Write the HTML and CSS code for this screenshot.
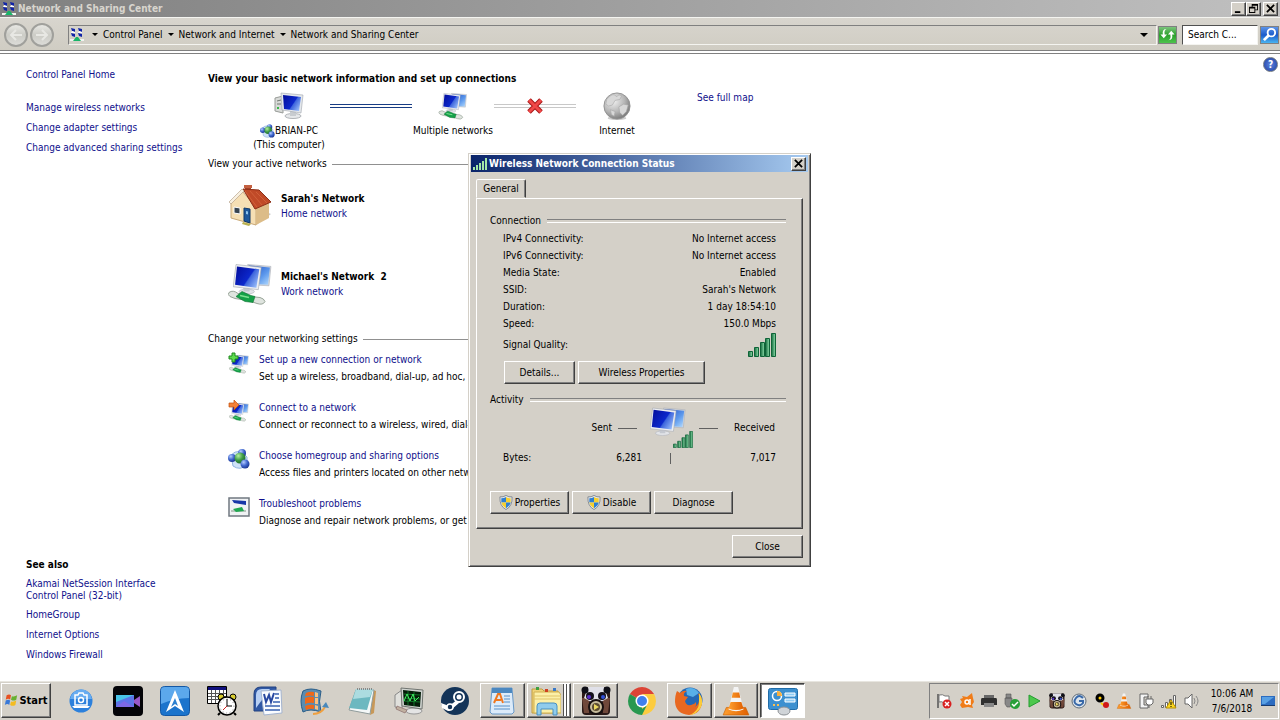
FILE: index.html
```
<!doctype html>
<html lang="en">

<head>
    <meta charset="utf-8">
    <title>Network and Sharing Center</title>
    <link rel="stylesheet" href="styles.css">
</head>

<body>
    <!-- shared icons -->
    <svg class="defs" aria-hidden="true">
        <defs>
            <linearGradient id="screen" x1="0" y1=".2" x2="1" y2=".8">
                <stop offset="0" stop-color="#0410a0" />
                <stop offset=".55" stop-color="#0c28cc" />
                <stop offset=".6" stop-color="#3c64dc" />
                <stop offset="1" stop-color="#9cc0fa" />
            </linearGradient>
            <linearGradient id="screen2" x1="0" y1="0" x2="1" y2="1">
                <stop offset="0" stop-color="#1c48c0" />
                <stop offset=".6" stop-color="#5c98ec" />
                <stop offset="1" stop-color="#b4dcff" />
            </linearGradient>
            <radialGradient id="grayball" cx=".35" cy=".3" r=".75">
                <stop offset="0" stop-color="#f4f4f4" />
                <stop offset=".6" stop-color="#b4b4b4" />
                <stop offset="1" stop-color="#777" />
            </radialGradient>
            <radialGradient id="blueball" cx=".35" cy=".3" r=".8">
                <stop offset="0" stop-color="#b4ccff" />
                <stop offset=".5" stop-color="#3f66cc" />
                <stop offset="1" stop-color="#142c86" />
            </radialGradient>
            <radialGradient id="greenball" cx=".35" cy=".3" r=".8">
                <stop offset="0" stop-color="#b4f0a0" />
                <stop offset=".5" stop-color="#3f9c48" />
                <stop offset="1" stop-color="#146024" />
            </radialGradient>
            <linearGradient id="bar" x1="0" y1="0" x2="1" y2="0">
                <stop offset="0" stop-color="#12683c" />
                <stop offset="1" stop-color="#8fe0ac" />
            </linearGradient>
            <linearGradient id="cone" x1="0" y1="0" x2="1" y2="0">
                <stop offset="0" stop-color="#ffa030" />
                <stop offset="1" stop-color="#e06000" />
            </linearGradient>
        </defs>
        <symbol id="monitors" viewBox="5 0 40 32">
            <path d="M20 1l24 2-2 20-19-1z" fill="#d4d8de" stroke="#a8acb4" stroke-width=".6" />
            <path d="M21 2l22 2-2 18-18-1z" fill="url(#screen2)" />
            <ellipse cx="19" cy="29" rx="8" ry="2.500" fill="#e2e4e8" stroke="#b4b8c0" stroke-width=".7" />
            <path d="M15 23l7 2v4h-6z" fill="#c4c8d0" />
            <path d="M8 1l26 3-3 23L5 24z" fill="#eceef2" stroke="#a0a4ac" stroke-width=".6" />
            <path d="M9 3l23 3-3 19L7 22z" fill="url(#screen)" />
        </symbol>
        <symbol id="nets" viewBox="0 0 44 43">
            <use href="#monitors" x="5" y="1" width="39" height="31" />
            <path d="M1 30q4-3 9 1l12 3 10 1q4 1 5 4-2 4-8 2l-9-3-13-2-5-2q-3-2-1-4z" fill="#dfe4df" stroke="#98a498" />
            <path d="M8 34l6-5 9 4 4 1-2 6-8-1z" fill="#14a048" stroke="#107030" stroke-width=".6" />
            <path d="M12 33l9 2" stroke="#7ce090" stroke-width="1.500" />
        </symbol>
        <symbol id="pc" viewBox="0 0 30 28">
            <path d="M1 6l8-2v17l-8-2z" fill="#d8dad8" stroke="#989c98" />
            <path d="M3 9l4-1M3 12h4" stroke="#707870" />
            <path d="M3 15h2v2H3z" fill="#38b848" />
            <ellipse cx="19" cy="24" rx="8" ry="2.500" fill="#e6e8ea" stroke="#b0b4b8" />
            <path d="M16 18h6v6h-6z" fill="#c8ccd0" />
            <path d="M7 1l22 2-2 18-19-3z" fill="#e4e8ec" stroke="#a0a4ac" stroke-width=".6" />
            <path d="M9 3l18 2-2 14-15-2z" fill="url(#screen)" />
        </symbol>
        <symbol id="homegroup" viewBox="0 0 22 20">
            <path d="M3 6q8-8 16 2v8q-7 6-14 1z" fill="#cfe2f8" stroke="#90b4e0" />
            <circle cx="14" cy="4" r="4" fill="url(#blueball)" />
            <circle cx="4" cy="9" r="4" fill="url(#blueball)" />
            <circle cx="12" cy="9" r="5.500" fill="url(#greenball)" />
            <circle cx="17" cy="15" r="4.500" fill="url(#blueball)" />
        </symbol>
        <symbol id="bars" viewBox="0 0 28 24">
            <g fill="url(#bar)" stroke="#0f6438">
                <path d="M.5 18.500h4v5h-4z" />
                <path d="M6.500 14.500h4v9h-4z" />
                <path d="M12.500 9.500h4v14h-4z" />
                <path d="M17.500 5.500h4v18h-4z" />
                <path d="M23.500 .5h4v23h-4z" />
            </g>
        </symbol>
        <symbol id="shield" viewBox="0 0 14 16">
            <path d="M7 .5q3 2 6.500 1.500.5 10-6.500 13.500Q0 12 .5 2 4 2.500 7 .5z" fill="#e8ecf0" stroke="#808890" />
            <path d="M7 2v6H2V3.500Q5 3.500 7 2z" fill="#2f7fd0" />
            <path d="M7 2v6h5V3.500Q9 3.500 7 2z" fill="#f6cf30" />
            <path d="M7 8v6Q3 12 2 8z" fill="#f6cf30" />
            <path d="M7 8v6q4-2 5-6z" fill="#2f7fd0" />
        </symbol>
        <symbol id="center" viewBox="0 0 14 15">
            <path d="M1 1l4 1v3l-3-1zM8 1l4 1v3L9 4zM1 6l4 1v3L2 9zM8 6l4 1v3L9 9z" fill="#1024a8" />
            <path d="M2 4l3 1v1H1zM9 4l3 1v1H8z" fill="#fff" />
            <path d="M0 12h14v2H0z" fill="#f0f4f0" />
            <path d="M3 14l3-4h2l3 4z" fill="#18b468" />
        </symbol>
        <symbol id="vlc" viewBox="0 0 24 28">
            <path d="M3 20h18l3 7H0z" fill="url(#cone)" stroke="#c86000" stroke-width=".6" />
            <path d="M10 1h4l5 21q-7 3-14 0z" fill="#f4f4f4" />
            <path d="M9 6h6l1 5H8zM7 15h10l2 6q-7 3-14 0z" fill="url(#cone)" />
        </symbol>
        <symbol id="dvd" viewBox="0 0 30 30">
            <rect x="1" y="1" width="28" height="28" rx="4" fill="#2c1a18" />
            <path d="M1 12h7v15H3zM22 12h7l-2 15h-5z" fill="#70483a" />
            <path d="M7 1h16l4 11-7 4H10l-7-4z" fill="#e0e0e8" />
            <circle cx="4" cy="4" r="3.500" fill="#101018" />
            <circle cx="26" cy="4" r="3.500" fill="#101018" />
            <circle cx="9" cy="10" r="4" fill="#14101c" />
            <circle cx="21" cy="10" r="4" fill="#14101c" />
            <circle cx="8" cy="11" r="2" fill="#5a30d0" />
            <circle cx="22" cy="11" r="2" fill="#3050d8" />
            <circle cx="15" cy="21" r="7" fill="#c8bc9c" stroke="#181010" stroke-width="2" />
            <circle cx="15" cy="21" r="4" fill="#5c4c30" />
            <path d="M13 18l5 3-5 3z" fill="#ecd860" />
        </symbol>
    </svg>

    <header class="titlebar">
        <svg class="app-icon"><use href="#center" /></svg>
        <h1>Network and Sharing Center</h1>
        <div class="win-buttons">
            <button class="win-button" aria-label="Minimize"><svg viewBox="0 0 10 10"><path d="M1 8h6v2H1z" /></svg></button>
            <button class="win-button" aria-label="Restore"><svg viewBox="0 0 10 10"><path d="M3 0h7v7H7V6h2V2H4v1H3zM0 3h7v7H0zM1 5v4h5V5z" fill-rule="evenodd" /></svg></button>
            <button class="win-button last" aria-label="Close"><svg viewBox="0 0 10 10"><path d="M1 1l8 8M9 1L1 9" stroke="#000" stroke-width="2" /></svg></button>
        </div>
    </header>

    <nav class="toolbar">
        <div class="travel">
            <button class="round" aria-label="Back"><svg viewBox="0 0 14 14"><path d="M13 7H3M7 2L2 7l5 5" /></svg></button>
            <button class="round" aria-label="Forward"><svg viewBox="0 0 14 14"><path d="M1 7h10M7 2l5 5-5 5" /></svg></button>
        </div>
        <div class="address">
            <svg class="app-icon"><use href="#center" /></svg>
            <span class="arrow"></span>
            <a href="#">Control Panel</a>
            <span class="arrow"></span>
            <a href="#">Network and Internet</a>
            <span class="arrow"></span>
            <a href="#">Network and Sharing Center</a>
            <button class="history" aria-label="Previous locations"><span class="arrow big"></span></button>
        </div>
        <button class="refresh" aria-label="Refresh">
            <svg viewBox="0 0 16 16"><path d="M7 2Q4 3 5 8H7.500L4 12 .5 8H3Q2 2 7 2zM9 14q3-1 2-6H8.500L12 4l3.500 4H13q1 6-4 6z" fill="#fff" /></svg>
        </button>
        <input class="search" type="text" value="Search C..." aria-label="Search Control Panel">
        <button class="search-go" aria-label="Search">
            <svg viewBox="0 0 16 16" fill="none" stroke="#fff" stroke-width="2"><circle cx="10" cy="6" r="4" /><path d="M7 9l-5 5" stroke-width="3" /></svg>
        </button>
    </nav>

    <div class="content">
        <aside class="sidebar">
            <a href="#" class="home">Control Panel Home</a>
            <a href="#">Manage wireless networks</a>
            <a href="#">Change adapter settings</a>
            <a href="#">Change advanced sharing settings</a>
            <h2>See also</h2>
            <a href="#" class="two-lines">Akamai NetSession Interface Control Panel (32-bit)</a>
            <a href="#">HomeGroup</a>
            <a href="#">Internet Options</a>
            <a href="#">Windows Firewall</a>
        </aside>

        <main>
            <h2>View your basic network information and set up connections</h2>
            <div class="map">
                <div class="node">
                    <svg><use href="#pc" /></svg>
                    <span class="node-name"><svg class="tiny"><use href="#homegroup" /></svg>BRIAN-PC</span>
                    <span>(This computer)</span>
                </div>
                <div class="wire"></div>
                <div class="node">
                    <svg><use href="#nets" /></svg>
                    <span>Multiple networks</span>
                </div>
                <div class="wire broken">
                    <svg class="cross" viewBox="0 0 16 16"><path d="M2 2l12 12M14 2L2 14" stroke="#a81818" stroke-width="5" /><path d="M2 2l12 12M14 2L2 14" stroke="#f04848" stroke-width="3" /></svg>
                </div>
                <div class="node">
                    <svg viewBox="0 0 30 30">
                        <ellipse cx="15" cy="28" rx="10" ry="2" fill="#ccc" />
                        <circle cx="15" cy="15" r="14" fill="url(#grayball)" stroke="#909090" />
                        <path d="M4 8q5-6 8-5l3 2 2-2 3 1-2 4-5 1-3 5-4 1-3-2zM17 16l5-3 5 1-2 7-4 4-3-3zM8 19l5 2-1 5-3-2z" fill="#d8d8d8" stroke="#a4a4a4" stroke-width=".6" />
                    </svg>
                    <span>Internet</span>
                </div>
                <a class="full-map" href="#">See full map</a>
            </div>

            <h3 class="rule">View your active networks</h3>
            <div class="network">
                <svg viewBox="0 0 44 44">
                    <path d="M38 28l5 2-16 12z" fill="#c8c8c8" />
                    <path d="M17 2h6v7h-6z" fill="#a84428" />
                    <path d="M16 1h8v3h-8z" fill="#c46040" />
                    <path d="M3 17L14 7l14 16v18L3 34z" fill="#f6dfb4" stroke="#c8a878" />
                    <path d="M28 22l13-5v17l-13 7z" fill="#dcbc88" />
                    <path d="M15 5l16 1 12 12-16 7z" fill="#c04a28" stroke="#8c3018" />
                    <path d="M17 7l12 16M22 7l12 14M28 8l11 11" stroke="#d0603a" />
                    <path d="M1 18L14 5l2 2L3 20z" fill="#f8f0e0" stroke="#b09880" stroke-width=".6" />
                    <path d="M6 23l6 1v6l-6-1z" fill="#384450" stroke="#fff" />
                    <path d="M16 24l6 1v14l-6-2z" fill="#20589c" stroke="#103868" />
                    <path d="M18 27l2 .5v3l-2-.5z" fill="#90c4ec" />
                    <path d="M15 38l8 2-2 2-7-2z" fill="#b8b050" />
                </svg>
                <div>
                    <strong>Sarah's Network</strong>
                    <a href="#">Home network</a>
                </div>
            </div>
            <div class="network">
                <svg><use href="#nets" /></svg>
                <div>
                    <strong>Michael's Network&nbsp; 2</strong>
                    <a href="#">Work network</a>
                </div>
            </div>

            <h3 class="rule">Change your networking settings</h3>
            <ul class="tasks">
                <li>
                    <svg viewBox="0 0 22 22">
                        <use href="#nets" x="1" y="2" width="20" height="20" />
                        <path d="M4 1h3v3h3v3H7v3H4V7H1V4h3z" fill="#5cdc4c" stroke="#208820" />
                    </svg>
                    <a href="#">Set up a new connection or network</a>
                    <p>Set up a wireless, broadband, dial-up, ad hoc,</p>
                </li>
                <li>
                    <svg viewBox="0 0 22 22">
                        <use href="#nets" x="1" y="2" width="20" height="20" />
                        <path d="M1 3h5V0l5 5-5 5V7H1z" fill="#f48038" stroke="#c05010" stroke-width=".7" />
                    </svg>
                    <a href="#">Connect to a network</a>
                    <p>Connect or reconnect to a wireless, wired, dial-up</p>
                </li>
                <li>
                    <svg><use href="#homegroup" /></svg>
                    <a href="#">Choose homegroup and sharing options</a>
                    <p>Access files and printers located on other network</p>
                </li>
                <li>
                    <svg viewBox="0 0 22 22">
                        <path d="M1 2h20v18H1z" fill="#f0f2f4" stroke="#707880" stroke-width="1.500" />
                        <path d="M4 4l14 1v4L6 7z" fill="#1838a8" />
                        <path d="M3 14h15v2H3z" fill="#b8c4bc" />
                        <path d="M5 13l9-2 2 4-8 1z" fill="#20a850" />
                    </svg>
                    <a href="#">Troubleshoot problems</a>
                    <p>Diagnose and repair network problems, or get</p>
                </li>
            </ul>
        </main>
        <button class="help" aria-label="Help">?</button>
    </div>

    <!-- status window, floats over the control panel -->
    <section class="dialog" role="dialog" aria-labelledby="dialog-title">
        <div class="dialog-title">
            <svg viewBox="0 0 14 12"><path d="M0 9h2v3H0zM3 7h2v5H3zM6 5h2v7H6zM9 3h2v9H9zM12 0h2v12h-2z" fill="#a4e8a8" /></svg>
            <h2 id="dialog-title">Wireless Network Connection Status</h2>
            <button class="win-button" aria-label="Close"><svg viewBox="0 0 10 10"><path d="M1 1l8 8M9 1L1 9" stroke="#000" stroke-width="2" /></svg></button>
        </div>
        <button class="tab">General</button>
        <div class="panel">
            <h3 class="etched">Connection</h3>
            <table class="facts">
                <tr><th>IPv4 Connectivity:</th><td>No Internet access</td></tr>
                <tr><th>IPv6 Connectivity:</th><td>No Internet access</td></tr>
                <tr><th>Media State:</th><td>Enabled</td></tr>
                <tr><th>SSID:</th><td>Sarah's Network</td></tr>
                <tr><th>Duration:</th><td>1 day 18:54:10</td></tr>
                <tr><th>Speed:</th><td>150.0 Mbps</td></tr>
                <tr class="signal"><th>Signal Quality:</th><td><svg><use href="#bars" /></svg></td></tr>
            </table>
            <div class="buttons inset">
                <button class="push">Details...</button>
                <button class="push wide">Wireless Properties</button>
            </div>
            <h3 class="etched">Activity</h3>
            <div class="activity">
                <span class="sent">Sent</span>
                <span class="dash"></span>
                <svg viewBox="0 0 44 42">
                    <use href="#monitors" x="0" y="0" width="36" height="29" />
                    <use href="#bars" x="23" y="24" width="20" height="17" />
                </svg>
                <span class="dash"></span>
                <span class="received">Received</span>
            </div>
            <div class="bytes">
                <span>Bytes:</span>
                <span class="count">6,281</span>
                <span class="pipe"></span>
                <span class="count">7,017</span>
            </div>
            <div class="buttons">
                <button class="push mid"><svg><use href="#shield" /></svg>Properties</button>
                <button class="push mid"><svg><use href="#shield" /></svg>Disable</button>
                <button class="push mid">Diagnose</button>
            </div>
        </div>
        <button class="push close">Close</button>
    </section>

    <footer class="taskbar">
        <button class="start">
            <svg viewBox="0 0 16 16">
                <path d="M3 2q3-2 5 0L7 7Q5 5 2 7z" fill="#e85020" />
                <path d="M9 3q3 1 6-1l-1 5q-3 2-6 0z" fill="#68b030" />
                <path d="M2 8q3-2 5 0l-1 5q-2-2-5 0z" fill="#3878d8" />
                <path d="M8 9q3 1 6-1l-1 5q-3 2-6 0z" fill="#f4bc20" />
            </svg>Start
        </button>
        <div class="apps">
            <button class="app" aria-label="Screenshot">
                <svg viewBox="0 0 30 30">
                    <circle cx="15" cy="15" r="11.500" fill="#2c80dc" />
                    <path d="M4 13q2-9 11-9.500 9 0 11 9.500z" fill="#68acf0" />
                    <path d="M9 9h3l1-2h4l1 2h3v10H9z" fill="none" stroke="#fff" stroke-width="1.500" />
                    <circle cx="15" cy="14" r="2.500" fill="none" stroke="#fff" stroke-width="1.500" />
                    <path d="M6 20h18l-2 2H8z" fill="#fff" />
                </svg>
            </button>
            <button class="app" aria-label="Video editor">
                <svg viewBox="0 0 30 30">
                    <rect width="30" height="30" rx="4" fill="#040408" />
                    <path d="M3 9h18v12H3z" fill="#5c74e8" />
                    <path d="M3 9h18L3 16z" fill="#48c4e8" />
                    <path d="M3 21l8-6 10 6z" fill="#7c68e4" />
                    <path d="M21 14l6-4v11l-6-4z" fill="#9858c8" />
                </svg>
            </button>
            <button class="app" aria-label="Browser">
                <svg viewBox="0 0 30 30">
                    <rect x=".5" y=".5" width="29" height="29" rx="4" fill="#1c74cc" stroke="#1458a4" />
                    <path d="M1 4q0-3 4-3h20q4 0 4 3v8Q14 12 1 18z" fill="#5ca8ec" />
                    <path d="M15 4l9 22-9-6-9 6z" fill="#fff" />
                    <path d="M15 12l3 8-3-2-4 3z" fill="#2c80d0" />
                </svg>
            </button>
            <button class="app" aria-label="Scheduler">
                <svg viewBox="0 0 30 30">
                    <path d="M.5 .5h19v17H.5z" fill="#fff" stroke="#000" />
                    <path d="M1 1h18v3H1z" fill="#10107c" />
                    <path d="M1 7.500h18M1 10.500h18M1 13.500h18M4.500 4v13M8.500 4v13M12.500 4v13M16.500 4v13" stroke="#555" />
                    <circle cx="14" cy="11" r="3" fill="#d8cc30" stroke="#000" />
                    <circle cx="26" cy="11" r="3" fill="#d8cc30" stroke="#000" />
                    <path d="M13 27l-2 2M27 27l2 2" stroke="#000" stroke-width="2" />
                    <circle cx="20" cy="20" r="9" fill="#fff" stroke="#000" stroke-width="1.500" />
                    <circle cx="20" cy="20" r="7" fill="none" stroke="#888" stroke-dasharray="1 2.600" />
                    <path d="M20 13v7h5" fill="none" stroke="#000" />
                    <path d="M20 20l-4 4" stroke="#d02020" />
                </svg>
            </button>
            <button class="app" aria-label="Word">
                <svg viewBox="0 0 30 30">
                    <path d="M1 25V8q0-7 7-7h15v24z" fill="#3058a4" stroke="#204080" />
                    <path d="M3 22V9q0-6 6-6h8z" fill="#b8d0f4" />
                    <path d="M8 5l20-1 1 23-18 2z" fill="#fafcff" stroke="#a4b4d0" />
                    <path d="M11 8l2 8 3-7 2 7 3-9" fill="none" stroke="#2848a0" stroke-width="2" />
                    <path d="M22 8h4M22 12h4M20 16h7M12 20h15M12 24h15" stroke="#3860b0" stroke-width="1.500" />
                </svg>
            </button>
            <button class="app" aria-label="Movie maker">
                <svg viewBox="0 0 30 30">
                    <path d="M3 5Q10 1 21 5q-3 10 0 21Q10 22 3 26-1 15 3 5z" fill="#5c8cb0" stroke="#285c88" />
                    <path d="M6 7q4-2 8-1v4q-4-1-9 0zM5 12q5-2 9-1v6q-5-1-9 1zM5 20q5-2 9-1v4q-4-1-8 1z" fill="#f06818" />
                    <path d="M15 6l3 1v4h-3zM15 12h3v6h-3zM15 19l3 1v4l-3-1z" fill="#fcc080" />
                    <path d="M13 28q8 0 12-7" fill="none" stroke="#f0a040" stroke-width="2" />
                    <path d="M22 21l4-5 3 6z" fill="#4888bc" />
                </svg>
            </button>
            <button class="app" aria-label="Notebook">
                <svg viewBox="0 0 30 30">
                    <path d="M26 4l3 1-2 22-4 2z" fill="#c89858" />
                    <path d="M9 4h18l-4 24-21-4z" fill="#f4f8f8" stroke="#909c9c" />
                    <path d="M9 3h17l-6 21-18-2z" fill="#6cb8c0" />
                    <path d="M9 3h17l-3 8-17 2z" fill="#acdce0" />
                    <path d="M10 3h16" stroke="#888" stroke-dasharray="1 1" stroke-width="2" />
                </svg>
            </button>
            <button class="app" aria-label="System monitor">
                <svg viewBox="0 0 30 30">
                    <path d="M1 9l7-5v19l-7-2z" fill="#e0e0dc" stroke="#888" />
                    <ellipse cx="20" cy="25" rx="8" ry="3" fill="#e4e4e4" stroke="#999" />
                    <path d="M7 2l22 2-1 19-20-3z" fill="#d0d4d0" stroke="#707470" />
                    <path d="M9 4l18 2-1 15-16-2z" fill="#041c08" />
                    <path d="M10 8l16 1M10 12l16 1M10 15l16 1M14 5v14M20 6v14" stroke="#189838" stroke-width=".7" />
                    <path d="M10 15l3-7 3 7 3-7 2 7 4-4" fill="none" stroke="#40f060" />
                    <path d="M3 20l10 4-2 3-9-4z" fill="#c0b0a0" stroke="#806060" stroke-width=".6" />
                </svg>
            </button>
            <button class="app" aria-label="Steam">
                <svg viewBox="0 0 30 30">
                    <circle cx="15" cy="15" r="14" fill="#143458" />
                    <path d="M1 17l8 3 8-6 2 3-8 7q-2 2-5 0l-4-2z" fill="#fff" />
                    <circle cx="19" cy="11" r="5" fill="#143458" stroke="#fff" stroke-width="2" />
                    <circle cx="19" cy="11" r="2.500" fill="#fff" />
                    <circle cx="10" cy="21" r="3" fill="#143458" stroke="#fff" stroke-width="1.500" />
                </svg>
            </button>
            <button class="app open" aria-label="WordPad">
                <svg viewBox="0 0 30 30">
                    <path d="M5 2h20l2 24-2 2H5l-2-2z" fill="#dcebfa" stroke="#6898c8" />
                    <path d="M5 2h20v5H5z" fill="#4c88c0" />
                    <path d="M7 17l4-9h2l3 9M9 14h5" fill="none" stroke="#f07820" stroke-width="2" />
                    <path d="M17 10h6M17 13h6M17 16h6M7 20h16M7 23h16" stroke="#5890c8" />
                </svg>
            </button>
            <button class="app open stacked" aria-label="Explorer">
                <svg viewBox="0 0 30 30">
                    <path d="M1 3h10l2 2h14v22H1z" fill="#f0d478" stroke="#c09c40" />
                    <path d="M3 6h25l2 3v18H3z" fill="#fcf0a8" stroke="#d0b050" />
                    <path d="M3 10h26M3 13h26" stroke="#e0c468" />
                    <path d="M5 1h3v3H5z" fill="#40a040" />
                    <path d="M14 3h3v3h-3z" fill="#d04020" />
                    <path d="M22 2h3v3h-3z" fill="#3878c8" />
                    <path d="M6 29v-9q0-3 3-3h14q3 0 3 3v9h-4v-6H10v6z" fill="#90ccec" stroke="#4890c0" />
                </svg>
            </button>
            <button class="app open" aria-label="DVD ripper"><svg><use href="#dvd" /></svg></button>
            <button class="app" aria-label="Chrome">
                <svg viewBox="0 0 30 30">
                    <path d="M15 15L2.900 8A14 14 0 0 1 27.100 8z" fill="#dc4436" />
                    <path d="M15 15L27.100 8A14 14 0 0 1 15 29z" fill="#fccc40" />
                    <path d="M15 15v14A14 14 0 0 1 2.900 8z" fill="#289850" />
                    <path d="M15 8h12.100L21 18z" fill="#fccc40" />
                    <path d="M9 18l6 5 5-4-5 10z" fill="#289850" />
                    <circle cx="15" cy="15" r="6.500" fill="#fff" />
                    <circle cx="15" cy="15" r="5" fill="#4080ec" />
                </svg>
            </button>
            <button class="app open" aria-label="Firefox">
                <svg viewBox="0 0 30 30">
                    <circle cx="16" cy="14" r="12.500" fill="#2468b4" />
                    <path d="M12 3q8-3 13 4l-6 4-6-2z" fill="#58b0e8" />
                    <path d="M3 5l3 2q3-3 7-2-4 2-3 5l4 1-3 4q1 5 6 4 4-1 5-3 1 3-1 5 5-3 4-11l-1-3q4 3 4 9-1 12-13 13Q2 28 1 16 1 9 3 5z" fill="#e86820" />
                    <path d="M25 7q5 7 2 14-4 7-11 8 8-4 9-11z" fill="#fccc38" />
                </svg>
            </button>
            <button class="app open" aria-label="VLC"><svg><use href="#vlc" /></svg></button>
            <button class="app open active" aria-label="Control Panel">
                <svg viewBox="0 0 30 30">
                    <rect x=".5" y="2.500" width="29" height="21" rx="2" fill="#3c90d0" stroke="#206ca8" />
                    <circle cx="9" cy="10" r="4.500" fill="none" stroke="#fff" stroke-width="1.500" />
                    <path d="M9 10V5q5 0 5 5z" fill="#f8b040" />
                    <path d="M17 7h10v3H17zM17 13h10v3H17z" fill="#90ccf4" stroke="#fff" />
                    <path d="M5 19h2M9 19h2" stroke="#fcc050" stroke-width="2" />
                    <ellipse cx="16" cy="25" rx="6" ry="4" fill="#d0d4d8" stroke="#8c9094" />
                </svg>
            </button>
        </div>
        <div class="tray">
            <div class="tray-icons">
                <svg viewBox="0 0 16 16"><path d="M2 1v14" stroke="#555" stroke-width="1.500" /><path d="M3 2q4-1 6 1h4v7H8q-2-2-5-1z" fill="#fff" stroke="#777" /><circle cx="11" cy="11" r="4.500" fill="#d82020" /><path d="M9 9l4 4M13 9l-4 4" stroke="#fff" stroke-width="1.500" /></svg>
                <svg viewBox="0 0 16 16"><path d="M3 3l5 1 5-4 1 5 1 4-2 3 1 3-5-1-6 1-2-3 2-3-2-3 3-1z" fill="#f07c18" /><circle cx="8" cy="9" r="2" fill="none" stroke="#fff" stroke-width="1.500" /><path d="M11 6v6" stroke="#fff" stroke-width="1.500" /></svg>
                <svg viewBox="0 0 16 16"><path d="M3 2h10v4H3z" fill="#686868" /><path d="M1 5h14q1 0 1 2v5H0V7q0-2 1-2z" fill="#303030" /><path d="M3 10h10v4H3z" fill="#888" /></svg>
                <svg viewBox="0 0 16 16"><path d="M2 1h5v4H2zM1 5h7v6l-2 3H3l-2-3z" fill="#888" stroke="#555" stroke-width=".6" /><circle cx="11" cy="11" r="5" fill="#28a038" /><path d="M8 11l2 2 4-4" fill="none" stroke="#fff" stroke-width="1.500" /></svg>
                <svg viewBox="0 0 16 16"><path d="M3 2l11 6-11 6z" fill="#4cc84c" stroke="#249c30" /></svg>
                <svg><use href="#dvd" /></svg>
                <svg viewBox="0 0 16 16"><circle cx="8" cy="8" r="7" fill="#dce4ec" stroke="#606c78" /><path d="M12 5Q8 1 5 5t0 6q4 3 7-1V8H8" fill="none" stroke="#3868a8" stroke-width="2" /></svg>
                <svg viewBox="0 0 16 16"><circle cx="6" cy="5" r="3" fill="#fc0" stroke="#000" stroke-width="3" /><path d="M7 10l4 3" stroke="#fc0" stroke-width="2" /><circle cx="12" cy="12" r="3" fill="#d01818" /></svg>
                <svg><use href="#vlc" /></svg>
                <svg viewBox="0 0 16 16"><path d="M1 1h8v3H5v8h4v3H1z" fill="#f4f4f4" stroke="#666" /><path d="M7 6h7v4l-2 2H9l-2-2zM9 3v3M12 3v3M10 12v3" fill="#fff" stroke="#666" /></svg>
                <svg viewBox="0 0 16 16"><path d="M.5 12.500h2v2h-2zM4.500 9.500h2v5h-2zM8.500 6.500h2v8h-2zM12.500 2.500h2v12h-2z" fill="#fff" stroke="#666" /><path d="M10 7l5 8H5z" fill="#fcd820" stroke="#b89000" /><path d="M10 9v3M10 13v1" stroke="#000" /></svg>
                <svg viewBox="0 0 16 16"><path d="M1 5h3l4-4v14l-4-4H1z" fill="#fff" stroke="#666" /><path d="M10 5q2 3 0 6M12 3q4 5 0 10" fill="none" stroke="#888" /></svg>
            </div>
            <time class="clock" datetime="2018-07-06T10:06">10:06 AM<br>7/6/2018</time>
            <svg class="desktop" viewBox="0 0 14 12"><path d="M0 1h14v9H0z" fill="#2c6cc0" /><path d="M1 2h12L4 9H1z" fill="#58a0e4" /><path d="M0 10h14v1H0z" fill="#183c70" /></svg>
        </div>
    </footer>
</body>

</html>
```
FILE: styles.css
```
* {
    box-sizing: border-box;
}

body {
    display: flex;
    flex-direction: column;
    height: 100vh;
    margin: 0;
    overflow: hidden;
    background: #fff;
    color: #000;
    font: 10px/14px Tahoma, "DejaVu Sans Condensed", "DejaVu Sans", sans-serif;
}

h1,
h2,
h3,
p,
ul {
    margin: 0;
    padding: 0;
    font-size: inherit;
}

button,
input {
    padding: 0;
    font: inherit;
    color: inherit;
}

svg {
    flex: none;
}

a {
    color: #10108c;
    text-decoration: none;
}

.defs {
    position: absolute;
    width: 0;
    height: 0;
}

/* title bar */
.titlebar {
    display: flex;
    align-items: center;
    height: 17px;
    padding: 0 2px;
    gap: 2px;
    background: linear-gradient(to right, #808080, #c0c0c0);
    color: #d8d5ce;
}

.app-icon {
    width: 14px;
    height: 15px;
}

.win-buttons {
    display: flex;
    margin-left: auto;
}

.win-button {
    display: flex;
    align-items: center;
    justify-content: center;
    width: 15px;
    height: 14px;
    background: #d4d0c8;
    border: 1px solid;
    border-color: #fff #404040 #404040 #fff;
    box-shadow: inset -1px -1px #808080;
}

.win-button svg {
    width: 9px;
    height: 9px;
}

.win-button.last {
    margin-left: 2px;
}

/* address bar */
.toolbar {
    display: flex;
    align-items: center;
    height: 37px;
    padding: 0 1px 2px 4px;
    background: linear-gradient(#d8d5ce, #cfccc2);
    border-top: 1px solid #f4f4f0;
    border-bottom: 1px solid #808080;
    box-shadow: inset 0 -1px #fff, inset 0 -2px #fff, inset 0 -3px #808080;
}

.travel {
    display: flex;
    gap: 2px;
    margin-right: 14px;
}

.round {
    display: flex;
    align-items: center;
    justify-content: center;
    width: 24px;
    height: 24px;
    border: 2px solid #a0a09c;
    border-radius: 50%;
    background: linear-gradient(#e8e8e4, #ccccc6 50%, #dcdcd8);
}

.round svg {
    width: 14px;
    height: 14px;
    fill: none;
    stroke: #e8e8e4;
    stroke-width: 2;
}

.address {
    display: flex;
    flex: 1;
    align-items: center;
    gap: 5px;
    height: 20px;
    padding-left: 1px;
    border: 1px solid;
    border-color: #808080 #f4f4f0 #f4f4f0 #808080;
}

.address .app-icon {
    margin-right: 3px;
}

.address a {
    color: #000;
}

.arrow {
    border: 3px solid transparent;
    border-top-color: #000;
    border-bottom: 0;
}

.arrow.big {
    border-width: 4px 4px 0;
}

.history {
    display: flex;
    margin-left: auto;
    padding: 4px 8px;
    background: none;
    border: 0;
}

.refresh,
.search-go {
    display: flex;
    align-items: center;
    justify-content: center;
    width: 19px;
    height: 18px;
    border: 1px solid #808080;
}

.refresh {
    margin: 0 5px 0 1px;
    background: linear-gradient(#7cc47c, #2ca02c 50%, #4cc44c);
}

.search-go {
    margin-left: 2px;
    background: linear-gradient(#5c94e8, #1c5ccc 50%, #48b4f0);
}

.refresh svg,
.search-go svg {
    width: 15px;
    height: 15px;
}

.search {
    width: 76px;
    height: 20px;
    padding-left: 5px;
    background: #fff;
    border: 1px solid;
    border-color: #505050 #f4f4f0 #f4f4f0 #505050;
}

/* page */
.content {
    display: flex;
    flex: 1;
    min-height: 0;
}

.sidebar {
    display: flex;
    flex-direction: column;
    gap: 6px;
    width: 208px;
    padding: 14px 16px 19px 26px;
}

.sidebar .home {
    margin-bottom: 13px;
}

.sidebar h2 {
    margin-top: auto;
}

.sidebar .two-lines {
    max-width: 150px;
    line-height: 12px;
}

main {
    width: 560px;
    padding-top: 18px;
}

.map {
    display: flex;
    margin: 6px 0 5px;
    padding-left: 40px;
}

.node {
    display: flex;
    flex-direction: column;
    align-items: center;
    width: 82px;
    height: 60px;
    white-space: nowrap;
}

.node > svg {
    width: 30px;
    height: 28px;
    margin-bottom: 4px;
}

.node-name {
    display: flex;
}

.node-name .tiny {
    width: 15px;
    height: 14px;
}

.wire {
    width: 82px;
    height: 4px;
    margin-top: 12px;
    border: solid #183c84;
    border-width: 1px 0;
}

.wire.broken {
    display: flex;
    align-items: center;
    justify-content: center;
    border-color: #c8c8c8;
}

.cross {
    width: 16px;
    height: 16px;
}

.full-map {
    margin: -1px 0 0 39px;
}

.rule {
    display: flex;
    align-items: center;
    gap: 5px;
    font-weight: normal;
}

.rule::after {
    content: "";
    flex: 1;
    height: 1px;
    background: #909090;
}

.network {
    display: flex;
    align-items: center;
    gap: 9px;
    margin: 13px 0 34px 20px;
}

.network + .network {
    margin-bottom: 26px;
}

.network svg {
    width: 44px;
    height: 44px;
}

.network strong,
.network a {
    display: block;
    line-height: 15px;
}

.tasks {
    display: grid;
    gap: 14px;
    margin: 5px 0 0 20px;
    list-style: none;
    line-height: 17px;
}

.tasks li {
    display: grid;
    grid-template-columns: 22px 1fr;
    column-gap: 9px;
}

.tasks svg {
    grid-row: span 2;
    width: 22px;
    height: 24px;
}

.tasks p {
    white-space: nowrap;
    overflow: hidden;
}

.help {
    width: 15px;
    height: 15px;
    margin: 3px 2px 0 auto;
    border: 1px solid #707880;
    border-radius: 50%;
    background: radial-gradient(#5c84dc, #1c3ca4);
    color: #fff;
    font-weight: bold;
    line-height: 12px;
}

/* status window */
.dialog {
    position: absolute;
    top: 153px;
    left: 468px;
    width: 343px;
    padding: 1px 7px 8px 7px;
    background: #d4d0c8;
    border: 1px solid;
    border-color: #d4d0c8 #404040 #404040 #d4d0c8;
    box-shadow: inset 1px 1px #fff, inset -1px -1px #808080;
}

.dialog-title {
    display: flex;
    align-items: center;
    gap: 2px;
    height: 17px;
    margin: 0 -5px 7px -5px;
    padding: 0 2px;
    background: linear-gradient(to right, #0a246a, #a6caf0);
    color: #fff;
}

.dialog-title svg {
    width: 14px;
    height: 12px;
}

.dialog-title .win-button {
    margin-left: auto;
}

.dialog-title .win-button svg {
    width: 9px;
    height: 9px;
}

.tab {
    display: block;
    width: 50px;
    height: 19px;
    background: #d4d0c8;
    border: 1px solid;
    border-color: #fff #404040 transparent #fff;
    border-radius: 2px 2px 0 0;
    box-shadow: inset -1px 0 #808080;
}

.panel {
    padding: 15px 16px 14px 13px;
    border: 1px solid;
    border-color: #fff #404040 #404040 #fff;
    box-shadow: inset -1px -1px #808080;
}

.etched {
    display: flex;
    align-items: center;
    gap: 6px;
    font-weight: normal;
}

.etched::after {
    content: "";
    flex: 1;
    height: 2px;
    border-top: 1px solid #808080;
    border-bottom: 1px solid #fff;
}

.facts {
    width: 100%;
    margin-top: 2px;
    padding: 0 10px 0 13px;
    border-spacing: 0;
}

.facts th,
.facts td {
    height: 17px;
    padding: 0;
    font-weight: normal;
    text-align: left;
}

.facts td {
    text-align: right;
}

.facts .signal th,
.facts .signal td {
    height: 26px;
}

.facts svg {
    display: block;
    width: 28px;
    height: 24px;
    margin-left: auto;
}

.buttons {
    display: flex;
    gap: 3px;
}

.buttons.inset {
    margin: 3px 0 9px 14px;
}

.push {
    display: flex;
    align-items: center;
    justify-content: center;
    gap: 2px;
    width: 71px;
    height: 23px;
    background: #d4d0c8;
    border: 1px solid;
    border-color: #fff #404040 #404040 #fff;
    box-shadow: inset -1px -1px #808080;
}

.push.wide {
    width: 127px;
}

.push.mid {
    width: 79px;
}

.push svg {
    width: 14px;
    height: 15px;
}

.activity {
    display: flex;
    align-items: center;
    justify-content: flex-end;
    margin: 0 11px 2px 0;
}

.activity svg {
    width: 44px;
    height: 42px;
    margin: 0 5px 0 13px;
}

.dash {
    width: 19px;
    height: 1px;
    background: #606060;
}

.sent {
    margin-right: 6px;
}

.received {
    margin-left: 16px;
}

.bytes {
    display: grid;
    grid-template-columns: 1fr 60px 56px 78px;
    align-items: center;
    margin: 0 10px 26px 13px;
}

.count {
    text-align: right;
}

.pipe {
    justify-self: center;
    width: 1px;
    height: 11px;
    background: #606060;
}

.close {
    margin: 6px 0 0 auto;
}

/* task bar */
.taskbar {
    display: flex;
    align-items: center;
    height: 39px;
    padding: 1px;
    background: #d4d0c8;
    box-shadow: inset 0 1px #e8e6e0;
}

.start {
    display: flex;
    align-items: center;
    justify-content: center;
    gap: 1px;
    width: 50px;
    height: 35px;
    margin-right: 8px;
    background: #d4d0c8;
    border: 1px solid;
    border-color: #fff #404040 #404040 #fff;
    box-shadow: inset -1px -1px #808080;
    font-size: 11px;
    font-weight: bold;
}

.start svg {
    width: 14px;
    height: 15px;
}

.apps {
    display: grid;
    flex: 0 1 746px;
    grid-template-columns: repeat(16, 1fr);
    gap: 2px;
}

.app {
    display: flex;
    align-items: center;
    justify-content: center;
    height: 35px;
    background: none;
    border: 1px solid transparent;
}

.app svg {
    width: 30px;
    height: 30px;
}

.app.open {
    border-color: #fff #404040 #404040 #fff;
    box-shadow: inset -1px -1px #808080;
}

.app.stacked {
    padding-right: 6px;
    box-shadow: inset -1px -1px #808080, inset -3px 0 #fff, inset -4px 0 #505050, inset -6px 0 #fff, inset -7px 0 #505050;
}

.app.active {
    background: #fff;
    border-color: #404040 #fff #fff #404040;
    box-shadow: inset 1px 1px #808080;
}

.tray {
    display: flex;
    flex: 0 0 350px;
    align-items: center;
    height: 36px;
    margin-left: auto;
    padding: 0 3px;
    border: 1px solid;
    border-color: #808080 #fff #fff #808080;
}

.tray-icons {
    display: grid;
    flex: 1;
    grid-template-columns: repeat(12, 1fr);
    justify-items: center;
}

.tray-icons svg {
    width: 16px;
    height: 16px;
}

.clock {
    width: 58px;
    text-align: center;
    line-height: 15px;
}

.desktop {
    width: 14px;
    height: 12px;
}
```
